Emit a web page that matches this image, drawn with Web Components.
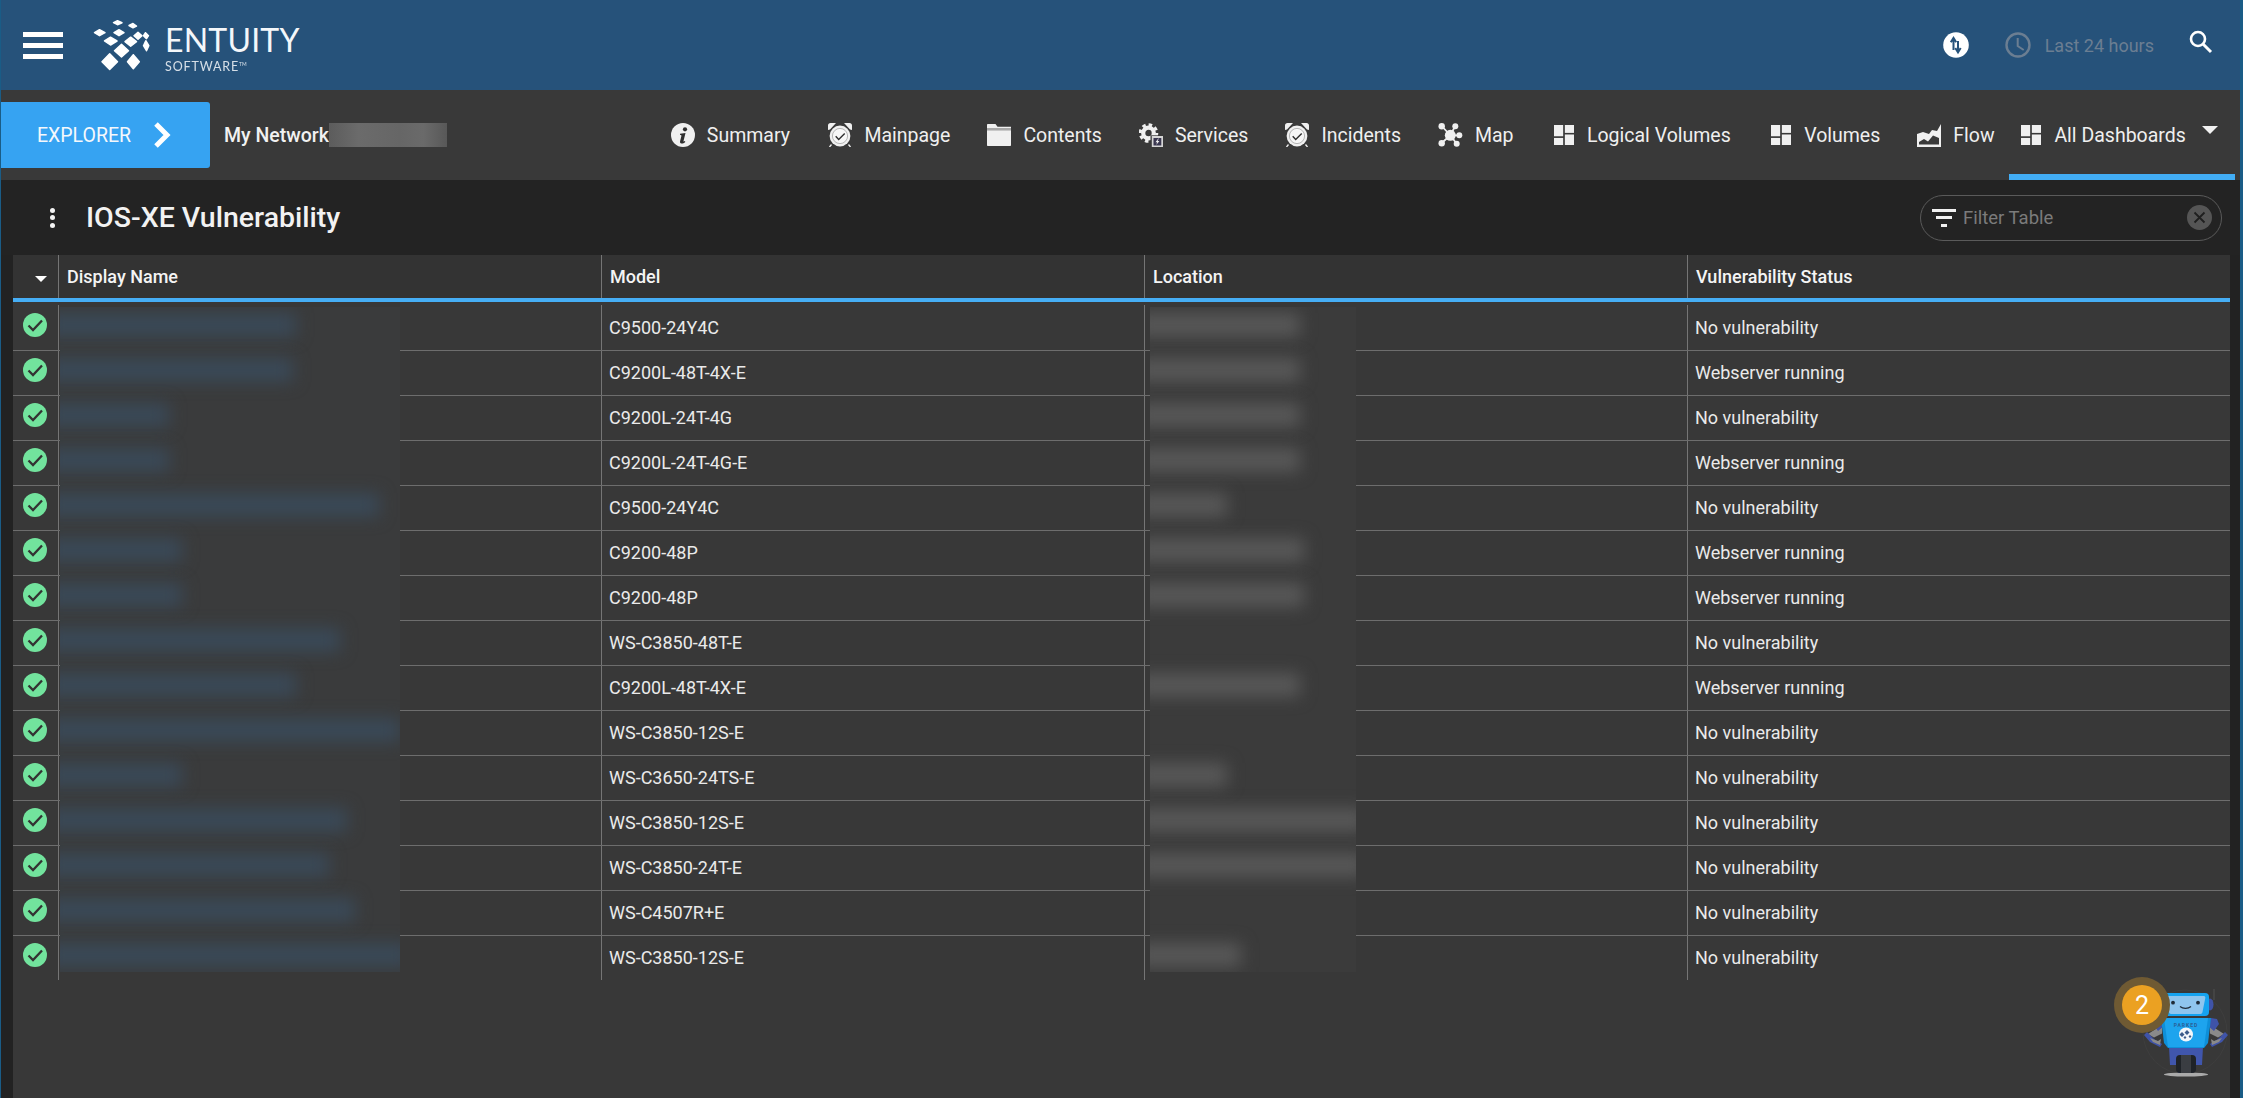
<!DOCTYPE html>
<html><head><meta charset="utf-8">
<style>
html,body{margin:0;padding:0;height:100%;overflow:hidden;background:#1a5c86;}
body{font-family:Roboto,"Liberation Sans",sans-serif;color:#eee;}
#app{display:flex;flex-direction:column;height:1098px;margin:0 3px 0 1px;position:relative;}
</style></head><body>
<div id="app">
<app-header></app-header>
<sub-nav></sub-nav>
<title-bar heading="IOS-XE Vulnerability"></title-bar>
<table-panel></table-panel>
<robot-badge count="2"></robot-badge>
</div>
<script>
const W='#f0f0f0';
const ICONS={
info:`<svg viewBox="0 0 24 24" width="24" height="24"><circle cx="12" cy="12" r="12" fill="${W}"/><circle cx="14" cy="6.300" r="2.100" fill="#2e2e2e"/><path d="M9 10.800l5.500-.8-2 8c-.1.600.3.800 1.400.1l.4.9c-1.400 1.200-2.800 1.700-3.900 1.500-1.200-.2-1.600-1-1.300-2.200l1.300-5.200c.1-.7-.2-1-1.300-1z" fill="#2e2e2e"/></svg>`,
alarm:`<svg viewBox="0 0 24 24" width="24" height="24"><path d="M0 7V2.500C0 1 1 0 2.500 0H8L2 6.500zM24 7V2.500C24 1 23 0 21.500 0H16l6 6.500z" fill="${W}"/><path d="M3.500 21.500L1.500 24M20.500 21.500l2 2.500" stroke="${W}" stroke-width="1.300"/><circle cx="12" cy="13" r="11" fill="#3a3a3a"/><circle cx="12" cy="13" r="10.400" fill="${W}"/><circle cx="12" cy="13" r="7.600" fill="#f7f7f7" stroke="#999" stroke-width=".7"/><path d="M7.700 13.300l3 3.200 6-6" fill="none" stroke="#2e2e2e" stroke-width="1.400"/></svg>`,
folder:`<svg viewBox="0 0 24 24" width="24" height="24"><path d="M0 2c0-.6.400-1 1-1h7.500l2 2.700H24V5.500H0z" fill="${W}"/><rect y="5" width="24" height="2.200" fill="#a8a8a8"/><path d="M0 7.200h24V22c0 .6-.4 1-1 1H1c-.6 0-1-.4-1-1z" fill="${W}"/></svg>`,
gear:`<svg viewBox="0 0 24 24" width="24" height="24"><circle cx="9.500" cy="10" r="8.300" fill="none" stroke="${W}" stroke-width="3" stroke-dasharray="3.500 3" /><circle cx="9.500" cy="10" r="5.300" fill="none" stroke="${W}" stroke-width="4.200"/><rect x="11.500" y="12.300" width="12.500" height="11.700" fill="#3a3a3a"/><rect x="12.800" y="13" width="11.200" height="11" fill="#d6d6d6"/><rect x="14.500" y="15" width="7.800" height="7.500" fill="#3a3750"/><path d="M19.300 15.500l-2.800 3.700h1.700l-1 2.800 3.200-4h-1.800l1.200-2.500z" fill="${W}"/></svg>`,
map:`<svg viewBox="0 0 25 24" width="25" height="24"><path d="M3.700 3l8.600 9.300L17.300 3M12.300 12.300h9M3.700 20l8.600-7.700 6.400 8.400" fill="none" stroke="${W}" stroke-width="1.800"/><circle cx="12.300" cy="12.300" r="5.500" fill="${W}"/><circle cx="3.700" cy="3.200" r="3.200" fill="${W}"/><circle cx="17.300" cy="3.200" r="3" fill="${W}"/><circle cx="21.300" cy="12.300" r="3" fill="${W}"/><circle cx="3.700" cy="20.300" r="3.200" fill="${W}"/><circle cx="18.700" cy="20.700" r="3" fill="${W}"/></svg>`,
dash:`<svg viewBox="0 0 19 19" width="20" height="20"><rect width="8.700" height="10.700" fill="${W}"/><rect y="12.300" width="8.700" height="6.700" fill="${W}"/><rect x="10.300" width="8.700" height="7.500" fill="${W}"/><rect x="10.300" y="9" width="8.700" height="10" fill="${W}"/></svg>`,
flow:`<svg viewBox="0 0 24 23" width="24" height="23"><path d="M0 10l6-2 6 2 3-4 5 1 4-7v23H0z" fill="${W}"/><path d="M2 20.500v-2.500l5-3 4 2.500 5-6 6 2.500v6.500z" fill="#3a3a3a"/></svg>`
};
function def(name,html,init){
  customElements.define(name,class extends HTMLElement{
    constructor(){super();this.attachShadow({mode:'open'});}
    connectedCallback(){this.shadowRoot.innerHTML=typeof html==='function'?html(this):html;if(init)init(this);}
  });
}
def('entuity-logo',`<style>
:host{display:flex;align-items:flex-start;height:52px}
svg{display:block}
.w{margin-left:15px;display:flex;flex-direction:column;color:#f4f7fa;font-family:Lato,"Noto Sans",sans-serif}
.a{font-size:32px;line-height:32px;margin-top:5px;letter-spacing:.2px;font-weight:400;white-space:nowrap}
.b{font-size:12.500px;line-height:13px;margin-top:2px;letter-spacing:.85px;opacity:.85;white-space:nowrap}
sup{font-size:5px;vertical-align:5px;letter-spacing:0}
</style>
<svg width="57" height="52" viewBox="94 19 57 52" fill="#fff" stroke="#fff" stroke-width="1.500" stroke-linejoin="round">
<path d="M114.500 22.700l4-2 4.500 2-4.500 2z"/><path d="M130 25.500l4-2 3.500 2.500-3.500 1.800z"/>
<path d="M95.500 32.700l5-3 5.500 3-5.500 3z"/><path d="M115 32.700l5-3 5 3-5 3z"/>
<path d="M135 35.700l4-3.500 4 3.500-4 3.500z"/><path d="M144.500 35.700l2-3 3 3-2 3z"/>
<path d="M105.500 41l6-3.800 6.500 3.800-6.500 4z"/><path d="M126 41.700l5.700-4.500 5.800 4.500-5.800 4.500z"/>
<path d="M144.500 45.700l2.300-5 3 5-2.300 5z"/>
<path d="M115.500 50.700l7-6.300 7 6.300-7 6.300z"/>
<path d="M103 61.700l7.700-8 7.800 8-7.800 7.800z"/><path d="M128.500 61.700l5.800-7 6 7-6 7z"/>
</svg>
<div class="w"><span class="a">ENTUITY</span><span class="b">SOFTWARE<sup>TM</sup></span></div>`);
def('hamburger-btn',`<style>:host{display:flex;flex-direction:column;gap:6px;width:40px}i{display:block;height:5px;background:#fff}</style><i></i><i></i><i></i>`);
def('app-header',`<style>
:host{display:flex;align-items:center;height:90px;background:#26527a;flex:none;box-sizing:border-box;padding-left:22px;padding-right:27px}
.logo{margin-left:30px}
.sp{flex:1}
.r{display:flex;align-items:center}
.time{color:#6b7e92;font-size:18px;margin-left:14px;margin-right:35px;white-space:nowrap}
.ck{margin-left:36px}
svg{display:block}
</style>
<hamburger-btn></hamburger-btn><entuity-logo class="logo"></entuity-logo><div class="sp"></div>
<div class="r">
<svg width="26" height="26" viewBox="0 0 26 26"><circle cx="13" cy="13" r="12.800" fill="#fff"/><path d="M10.500 18V7M7.800 10.300l2.700-4.300 2.700 4.300" stroke="#26527a" stroke-width="2" fill="none"/><path d="M15 9v11M12.300 16l2.700 4.300 2.700-4.300" stroke="#26527a" stroke-width="2" fill="none"/></svg>
<svg class="ck" width="26" height="26" viewBox="0 0 26 26" fill="none" stroke="#6b7e92" stroke-width="2.400"><circle cx="13" cy="13" r="11.500"/><path d="M12.700 6v8l6 4" stroke-width="2"/></svg>
<span class="time">Last 24 hours</span>
<svg width="24" height="24" viewBox="0 0 24 24" fill="none" stroke="#fff" style="margin-top:-6px"><circle cx="9" cy="9" r="7" stroke-width="2.600"/><path d="M14 14l8 8" stroke-width="3"/></svg>
</div>`);
def('nav-item',h=>`<style>
:host{display:flex;align-items:center;gap:${h.getAttribute('icon')==='dash'?13:12}px;font-size:19.500px;color:#efefef;white-space:nowrap;height:100%;${h.getAttribute('icon')==='dash'?'margin-left:3.400px;':''}}
.i{display:flex;align-items:center;justify-content:center;flex:none}
svg{display:block}
</style><span class="i">${ICONS[h.getAttribute('icon')]}</span><slot></slot>`);
def('explorer-btn',`<style>
:host{display:flex;align-items:center;width:209px;height:66px;background:#36a3f2;border-radius:0 3px 3px 0;box-sizing:border-box;padding-left:36px;font-size:19.500px;color:#f4f8fc;flex:none}
svg{margin-left:22px;display:block}
</style><slot></slot><svg width="18" height="26" viewBox="0 0 18 26" fill="none" stroke="#fff" stroke-width="5"><path d="M3 2l11 11L3 24"/></svg>`);
def('sub-nav',`<style>
:host{display:flex;align-items:center;height:90px;background:#393939;flex:none;position:relative}
.crumb{font-weight:500;font-size:19.500px;margin-left:14px;white-space:nowrap;color:#f1f1f1}
.mask{width:118px;height:24px;margin-left:0;background:linear-gradient(90deg,#5c5c5c,#6b6b6b 25%,#666 60%,#6a6a6a 80%,#585858);flex:none}
.items{display:flex;align-items:center;gap:37px;height:100%;margin-left:224px}
.items nav-item:nth-child(2){margin-left:1.400px}
.dash{display:flex;align-items:center;position:absolute;left:2008px;width:226px;top:0;bottom:0;box-sizing:border-box;border-bottom:6px solid #42adf5;padding-left:9px;padding-top:6px}
.tri{width:0;height:0;border-left:8px solid transparent;border-right:8px solid transparent;border-top:8px solid #f2f2f2;margin-left:16px;margin-top:-10px}
</style>
<explorer-btn>EXPLORER</explorer-btn><span class="crumb">My Network</span><span class="mask"></span>
<div class="items">
<nav-item icon="info">Summary</nav-item>
<nav-item icon="alarm">Mainpage</nav-item>
<nav-item icon="folder">Contents</nav-item>
<nav-item icon="gear">Services</nav-item>
<nav-item icon="alarm">Incidents</nav-item>
<nav-item icon="map">Map</nav-item>
<nav-item icon="dash">Logical Volumes</nav-item>
<nav-item icon="dash">Volumes</nav-item>
<nav-item icon="flow">Flow</nav-item>
</div>
<div class="dash"><nav-item icon="dash">All Dashboards</nav-item><span class="tri"></span></div>`);
def('filter-box',`<style>
:host{display:flex;align-items:center;width:302px;height:46px;box-sizing:border-box;border:1px solid #5a5a5a;border-radius:23px;padding:0 9px 0 11px;flex:none}
.t{color:#7b7b7b;font-size:18.500px;margin-left:7px;flex:1}
svg{display:block}
</style>
<svg width="24" height="24" viewBox="0 0 24 24" fill="#f0f0f0"><rect y="3" width="24" height="3"/><rect x="4" y="10" width="16" height="3"/><rect x="9" y="18" width="6" height="3"/></svg>
<span class="t">Filter Table</span>
<svg width="25" height="25" viewBox="0 0 25 25"><circle cx="12.500" cy="12.500" r="12.500" fill="#555"/><path d="M7.500 7.500l10 10M17.500 7.500l-10 10" stroke="#1f1f1f" stroke-width="1.800"/></svg>`);
def('title-bar',h=>`<style>
:host{display:flex;align-items:center;height:75px;background:#232323;flex:none;box-sizing:border-box;padding-left:49px;padding-right:18px}
.k{display:flex;flex-direction:column;gap:2.500px;width:5px;flex:none}
.k i{display:block;width:5px;height:5px;border-radius:50%;background:#f4f4f4}
h1{font-size:28.500px;font-weight:500;margin:0 0 0 31px;color:#f2f2f2;flex:1;white-space:nowrap}
</style><div class="k"><i></i><i></i><i></i></div><h1>${h.getAttribute('heading')}</h1><filter-box></filter-box>`);
def('status-ok',`<style>:host{display:block;width:24px;height:24px}svg{display:block}</style>
<svg width="24" height="24" viewBox="0 0 24 24"><circle cx="12" cy="12" r="12" fill="#72e39d"/><path d="M5.500 12.500l4.500 4.500 9-9.500" fill="none" stroke="#333" stroke-width="2.300"/></svg>`);
def('grid-row',h=>{
 const head=h.hasAttribute('head'),sp=h.hasAttribute('spacer'),last=h.hasAttribute('last');
 const first=head?`<svg width="12" height="6" viewBox="0 0 12 6" style="display:block"><path d="M0 0h12L6 6z" fill="#fff"/></svg>`:(sp?'':'<status-ok></status-ok>');
 return `<style>
:host{display:grid;grid-template-columns:45px repeat(4,543px);flex:none;box-sizing:border-box;height:${head?43:(sp?1:(last?44:45))}px;${head||sp||last?'':'border-bottom:1px solid #6d6d6d;'}}
.c{display:flex;align-items:center;box-sizing:border-box;border-left:1px solid #757575;padding-left:${head?8:7}px;font-size:18px;${head?'font-weight:500;':'padding-bottom:2px;'}white-space:nowrap;color:${head?'#f4f4f4':'#eaeaea'};overflow:hidden}
.f{border-left:0;padding-left:${head?22:10}px;${head?'padding-top:5px;':'padding-bottom:6px;'}}
</style><div class="c f">${first}</div><div class="c"><slot name="a"></slot></div><div class="c"><slot name="b"></slot></div><div class="c"><slot name="c"></slot></div><div class="c"><slot name="d"></slot></div>`});
def('blur-patch',h=>{
 const ws=(h.getAttribute('widths')||'').split(',').map(Number);
 const bars=ws.map((w,i)=>w?`<i style="top:${18+45*i-12}px;width:${w+14}px"></i>`:'').join('');
 return `<style>:host{display:block;position:absolute;top:52px;height:665px;background:${h.getAttribute('bg')};overflow:hidden}
i{position:absolute;left:-14px;height:24px;background:${h.getAttribute('bar')};filter:blur(8px)}</style>${bars}`});
const ROWS=[["C9500-24Y4C","No vulnerability"],["C9200L-48T-4X-E","Webserver running"],["C9200L-24T-4G","No vulnerability"],["C9200L-24T-4G-E","Webserver running"],["C9500-24Y4C","No vulnerability"],["C9200-48P","Webserver running"],["C9200-48P","Webserver running"],["WS-C3850-48T-E","No vulnerability"],["C9200L-48T-4X-E","Webserver running"],["WS-C3850-12S-E","No vulnerability"],["WS-C3650-24TS-E","No vulnerability"],["WS-C3850-12S-E","No vulnerability"],["WS-C3850-24T-E","No vulnerability"],["WS-C4507R+E","No vulnerability"],["WS-C3850-12S-E","No vulnerability"]];
def('table-panel',()=>`<style>
:host{display:block;flex:1;background:#222;box-sizing:border-box;padding:0 10px 0 12px;min-height:0}
.p{background:#383838;height:100%;display:flex;flex-direction:column;position:relative}
.h{background:#333;border-bottom:4px solid #46aef5}
.gap{height:3px;flex:none}
span{display:block}
</style><div class="p"><div class="h"><grid-row head><span slot="a">Display Name</span><span slot="b">Model</span><span slot="c">Location</span><span slot="d">Vulnerability Status</span></grid-row></div><div class="gap"></div><grid-row spacer></grid-row>
${ROWS.map((r,i)=>`<grid-row ${i==14?'last':''}><span slot="b">${r[0]}</span><span slot="d">${r[1]}</span></grid-row>`).join('')}
<blur-patch style="left:47px;width:340px" bg="#3a3b3c" bar="#3a4957" widths="236,233,109,109,319,122,122,280,236,340,122,287,269,295,350"></blur-patch>
<blur-patch style="left:1137px;width:206px" bg="#3b3b3b" bar="#575757" widths="150,150,150,150,77,154,154,0,150,0,77,216,216,0,91"></blur-patch>
</div>`);
def('robot-badge',h=>`<style>
:host{display:block;position:absolute;left:2112px;top:978px;width:116px;height:105px}
.halo{position:absolute;left:1px;top:-1px;width:56px;height:56px;border-radius:50%;background:#6f5a33;display:flex;align-items:center;justify-content:center}
.b{width:40px;height:40px;border-radius:50%;background:#eba122;color:#fff;font-size:25px;display:flex;align-items:center;justify-content:center}
svg{position:absolute;left:1px;top:0}
</style>
<svg width="116" height="105" viewBox="0 0 116 105">
<circle cx="71" cy="54" r="42" fill="none" stroke="#3e3e3e" stroke-width="1"/>
<path d="M100 11v11" stroke="#444" stroke-width="2"/>
<ellipse cx="72" cy="96.500" rx="22" ry="2" fill="#aaa"/>
<path d="M55 69h34l-1 18h-9v8H64v-8h-8z" fill="#4056ad"/>
<rect x="62" y="77" width="20" height="18" rx="4" fill="#1f2328"/>
<rect x="67" y="77" width="10" height="18" fill="#3a3d42"/>
<path d="M48 47l-14 9 6 3.500 8-4z" fill="#8a8a8a"/>
<path d="M96 47l14 9-6 3.500-8-4z" fill="#8a8a8a"/>
<path d="M33 54l7 7 8 5-2 3-10-5-6-7zM111 54l-7 7-8 5 2 3 10-5 6-7z" fill="#3f53a8"/>
<path d="M36 60l8 3 3-2-1 6-7-3zM108 60l-8 3-3-2 1 6 7-3z" fill="#8a8a8a"/>
<path d="M41 41l6-1 3 8-6 5-5-7zM103 41l-6-1-3 8 6 5 5-7z" fill="#3f53a8"/>
<path d="M47 40h50l-3 25-4 5H54l-4-5z" fill="#0e8fd9"/>
<path d="M50 40h44l-4 29H54z" fill="#1da4ee"/>
<text x="72" y="48.500" text-anchor="middle" font-family="Roboto" font-weight="700" font-size="5" letter-spacing="1" fill="#2c5f96">PARKED</text>
<circle cx="72" cy="56.500" r="7" fill="#f2f6fa"/>
<path d="M68 54l2.500 2.500L68 59l-2.500-2.500zM73 52l2.500 2.500-2.500 2.500-2.500-2.500zM76 57l1.500 1.500-1.500 1.500-1.500-1.500zM71 58l1.500 1.500-1.500 1.500-1.500-1.500z" fill="#3a5a8a"/>
<ellipse cx="96" cy="26.500" rx="3.500" ry="6" fill="#3f53a8"/>
<rect x="49" y="15" width="46" height="23" rx="4" fill="#15a3f0"/>
<path d="M53 18h37c1 0 1.500 1 1.300 2L88.500 34c-.2 1-1 2-2 2H57c-1 0-1.800-1-2-2L52 20c-.2-1 0-2 1-2z" fill="#8fc5ee"/>
<circle cx="59" cy="24.700" r="1.900" fill="#1f2b38"/><circle cx="84" cy="24.700" r="1.900" fill="#1f2b38"/>
<path d="M66 28.500c3 2.500 8 2.500 11 0" fill="none" stroke="#1f2b38" stroke-width="1.200"/>
</svg>
<div class="halo"><div class="b">${h.getAttribute('count')}</div></div>`);
</script>
</body></html>
